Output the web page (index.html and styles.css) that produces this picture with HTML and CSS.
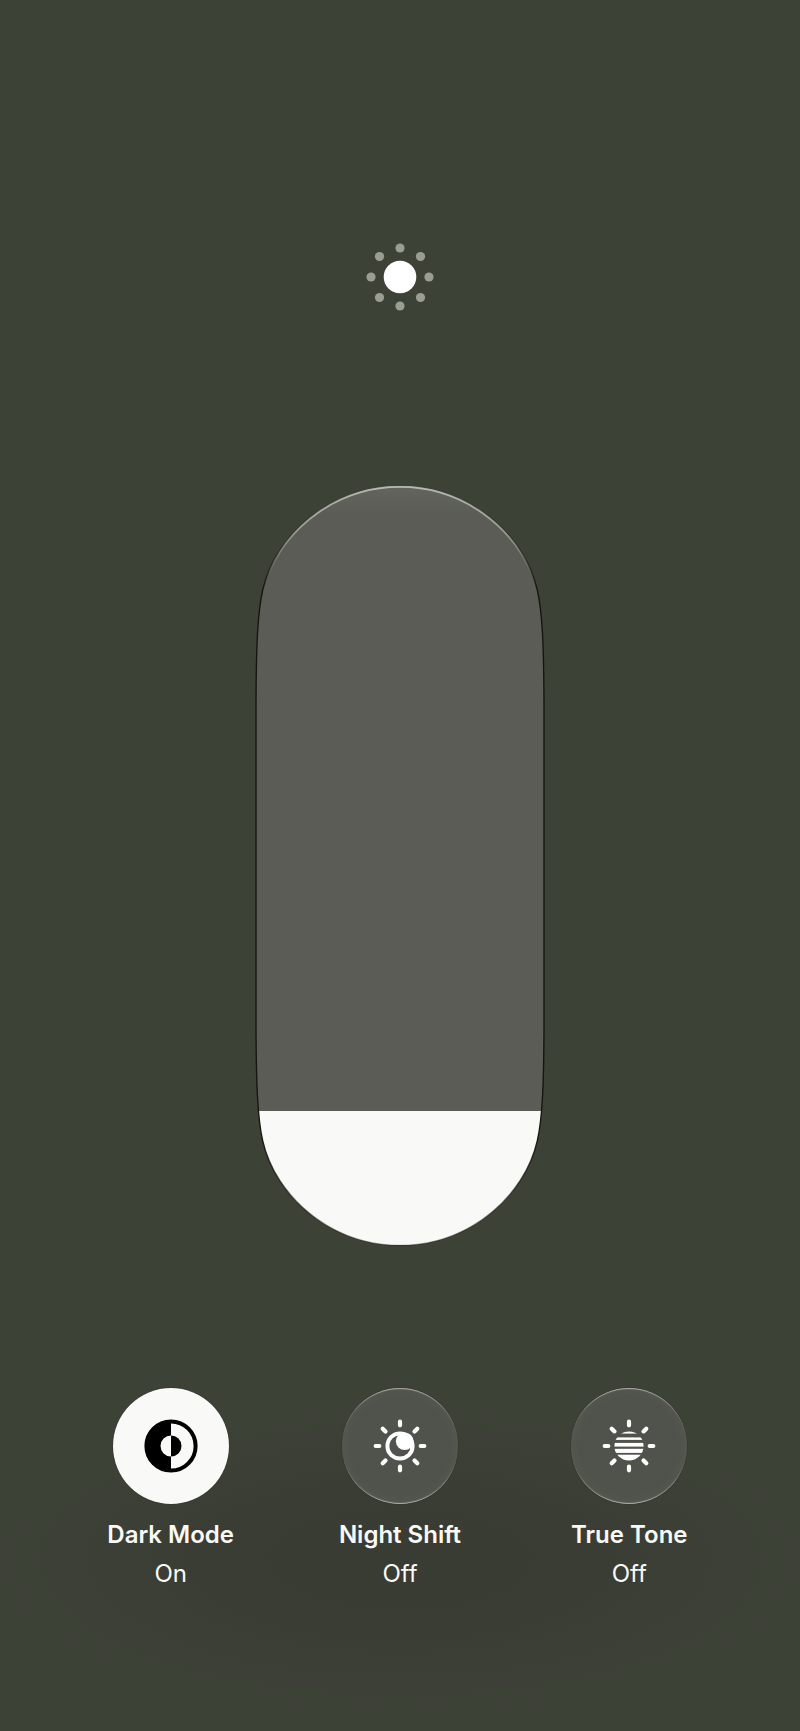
FILE: index.html
```html
<!DOCTYPE html>
<html lang="en">
	<head>
		<meta charset="UTF-8">
		<meta name="viewport" content="width=device-width, initial-scale=1">
		<title>Brightness</title>
		<link rel="stylesheet" href="styles.css">
	</head>
	<body>
		<main class="panel">
			<svg class="sun" viewBox="-34 -34 68 68" aria-hidden="true">
				<circle r="16.3" fill="#fff"/>
				<g class="dots">
					<circle cy="-29" r="4.6"/>
					<circle cx="20.5" cy="-20.5" r="4.6"/>
					<circle cx="29" r="4.6"/>
					<circle cx="20.5" cy="20.5" r="4.6"/>
					<circle cy="29" r="4.6"/>
					<circle cx="-20.5" cy="20.5" r="4.6"/>
					<circle cx="-29" r="4.6"/>
					<circle cx="-20.5" cy="-20.5" r="4.6"/>
				</g>
			</svg>

			<div class="slider">
				<input class="range" type="range" min="0" max="100" step="0.1" value="17.7" aria-label="Brightness" style="--level: 17.7%">
				<svg class="rim" viewBox="0 0 288 759" preserveAspectRatio="none" aria-hidden="true">
					<defs>
						<path id="capsule" d="M0 215C0.3 165 1.2 128 6.7 104C9.7 91 15.4 77 24 64A144 144 0 0 1 264 64C272.6 77 278.3 91 281.3 104C286.8 128 287.7 165 288 215V544C287.7 594 286.8 631 281.3 655C278.3 668 272.6 682 264 695A144 144 0 0 1 24 695C15.4 682 9.7 668 6.7 655C1.2 631 0.3 594 0 544Z"/>
						<clipPath id="track" clipPathUnits="objectBoundingBox">
							<path transform="scale(0.00347222 0.00131752)" d="M0 215C0.3 165 1.2 128 6.7 104C9.7 91 15.4 77 24 64A144 144 0 0 1 264 64C272.6 77 278.3 91 281.3 104C286.8 128 287.7 165 288 215V544C287.7 594 286.8 631 281.3 655C278.3 668 272.6 682 264 695A144 144 0 0 1 24 695C15.4 682 9.7 668 6.7 655C1.2 631 0.3 594 0 544Z"/>
						</clipPath>
						<linearGradient id="edge" x1="0" y1="0" x2="0" y2="1">
							<stop offset="0" stop-color="#14160f" stop-opacity="0"/>
							<stop offset="0.06" stop-color="#14160f" stop-opacity="0.4"/>
							<stop offset="0.14" stop-color="#14160f"/>
							<stop offset="0.86" stop-color="#14160f"/>
							<stop offset="1" stop-color="#14160f" stop-opacity="0.3"/>
						</linearGradient>
						<linearGradient id="shine" x1="0" y1="0" x2="0" y2="1">
							<stop offset="0" stop-color="#b8bbb0"/>
							<stop offset="0.5" stop-color="#a4a79d" stop-opacity="0.8"/>
							<stop offset="1" stop-color="#a4a79d" stop-opacity="0"/>
						</linearGradient>
					</defs>
					<use href="#capsule" fill="none" stroke="url(#edge)" stroke-width="1.4"/>
					<path d="M10 94A143 143 0 0 1 278 94" fill="none" stroke="url(#shine)" stroke-width="1.8"/>
				</svg>
			</div>

			<div class="modes">
				<button class="mode on" type="button" aria-pressed="true">
					<span class="disc">
						<svg viewBox="-28 -28 56 56" aria-hidden="true">
							<circle r="24.6" fill="none" stroke="#000" stroke-width="4"/>
							<path d="M0 -26A26 26 0 0 0 0 26V10.5A10.5 10.5 0 0 1 0 -10.5Z"/>
							<path d="M0 -10.5A10.5 10.5 0 0 1 0 10.5Z"/>
						</svg>
					</span>
					<span class="name">Dark Mode</span>
					<span class="state">On</span>
				</button>
				<button class="mode" type="button" aria-pressed="false">
					<span class="disc">
						<svg viewBox="-28 -28 56 56" aria-hidden="true">
							<path class="rays" d="M0 -24.3V-20.7M0 24.3V20.7M-24.3 0H-20.7M24.3 0H20.7M-17.3 -17.3L-14.5 -14.5M17.3 -17.3L14.5 -14.5M-17.3 17.3L-14.5 14.5M17.3 17.3L14.5 14.5"/>
							<circle r="14.6" fill="#fff"/>
							<circle r="10.6" fill="#50524c"/>
							<circle cx="4.7" cy="-4.7" r="8.8" fill="#fff"/>
						</svg>
					</span>
					<span class="name">Night Shift</span>
					<span class="state">Off</span>
				</button>
				<button class="mode" type="button" aria-pressed="false">
					<span class="disc">
						<svg viewBox="-28 -28 56 56" aria-hidden="true">
							<path class="rays" d="M0 -24.3V-20.7M0 24.3V20.7M-24.3 0H-20.7M24.3 0H20.7M-17.3 -17.3L-14.5 -14.5M17.3 -17.3L14.5 -14.5M-17.3 17.3L-14.5 14.5M17.3 17.3L14.5 14.5"/>
							<circle r="14.6" fill="#fff"/>
							<g fill="#50524c">
								<rect x="-15" y="-12.4" width="30" height="3.8"/>
								<rect x="-15" y="-6.1" width="30" height="3"/>
								<rect x="-15" y="0.6" width="30" height="2.2"/>
								<rect x="-15" y="6.9" width="30" height="1.8"/>
							</g>
						</svg>
					</span>
					<span class="name">True Tone</span>
					<span class="state">Off</span>
				</button>
			</div>
		</main>
		<script type="text/javascript">
			var range = document.querySelector(".range");
			range.oninput = function () {
				range.style.setProperty("--level", range.value + "%");
			}
			document.querySelectorAll(".mode").forEach(function (btn) {
				btn.onclick = function () {
					var on = btn.classList.toggle("on");
					btn.setAttribute("aria-pressed", on);
					btn.querySelector(".state").textContent = on ? "On" : "Off";
				}
			})
		</script>
	</body>
</html>
```
FILE: styles.css
```css
*{
	margin: 0;
	padding: 0;
	box-sizing: border-box;
}
body{
	background: #3d4237;
	color: #f9faf8;
	font-family: Inter, "Liberation Sans", sans-serif;
}
.panel{
	min-height: 100vh;
	padding: 243px 56px 100px;
	display: flex;
	flex-direction: column;
	align-items: center;
	background: radial-gradient(ellipse 50% 150px at 50% 1560px, #393c33 0%, #3a3d34 50%, #3d4237 100%) no-repeat;
}
.sun{
	width: 68px;
	height: 68px;
	margin-bottom: 175px;
}
.dots{
	fill: #9a9e92;
}

/* slider */
.slider{
	width: 288px;
	height: 759px;
	max-width: 100%;
	margin-bottom: 143px;
	position: relative;
}
.range{
	display: block;
	width: 100%;
	height: 100%;
	-webkit-appearance: none;
	appearance: none;
	writing-mode: vertical-lr;
	direction: rtl;
	background:
		linear-gradient(to top, #f9faf8 var(--level), transparent var(--level)),
		linear-gradient(#62645e, #5a5c55 30px);
	clip-path: url(#track);
	cursor: pointer;
}
.range::-webkit-slider-thumb{
	-webkit-appearance: none;
	width: 100%;
	height: 1px;
	background: transparent;
}
.rim{
	position: absolute;
	inset: 0;
	width: 100%;
	height: 100%;
	overflow: visible;
	pointer-events: none;
}

/* mode buttons */
.modes{
	width: 100%;
	display: grid;
	grid-template-columns: repeat(3, 1fr);
}
.mode{
	display: flex;
	flex-direction: column;
	align-items: center;
	border: 0;
	background: none;
	color: inherit;
	font-family: inherit;
	font-size: 24px;
	line-height: 39px;
	cursor: pointer;
}
.disc{
	width: 116px;
	height: 116px;
	margin-bottom: 11px;
	border-radius: 50%;
	display: flex;
	align-items: center;
	justify-content: center;
	background: #50524c;
	box-shadow: 0 0 1px #14160f, inset 0 2px 1px -1px #b0b3a8, inset 0 -2px 1px -1px #b0b3a8, inset 0 0 12px #5a5c55;
}
.disc svg{
	width: 56px;
	height: 56px;
}
.on .disc{
	background: #f9faf8;
	box-shadow: 0 0 1px #14160f;
}
.rays{
	fill: none;
	stroke: #fff;
	stroke-width: 4.2;
	stroke-linecap: round;
}
.name{
	font-weight: 600;
}
.state{
	font-weight: 400;
}
```
